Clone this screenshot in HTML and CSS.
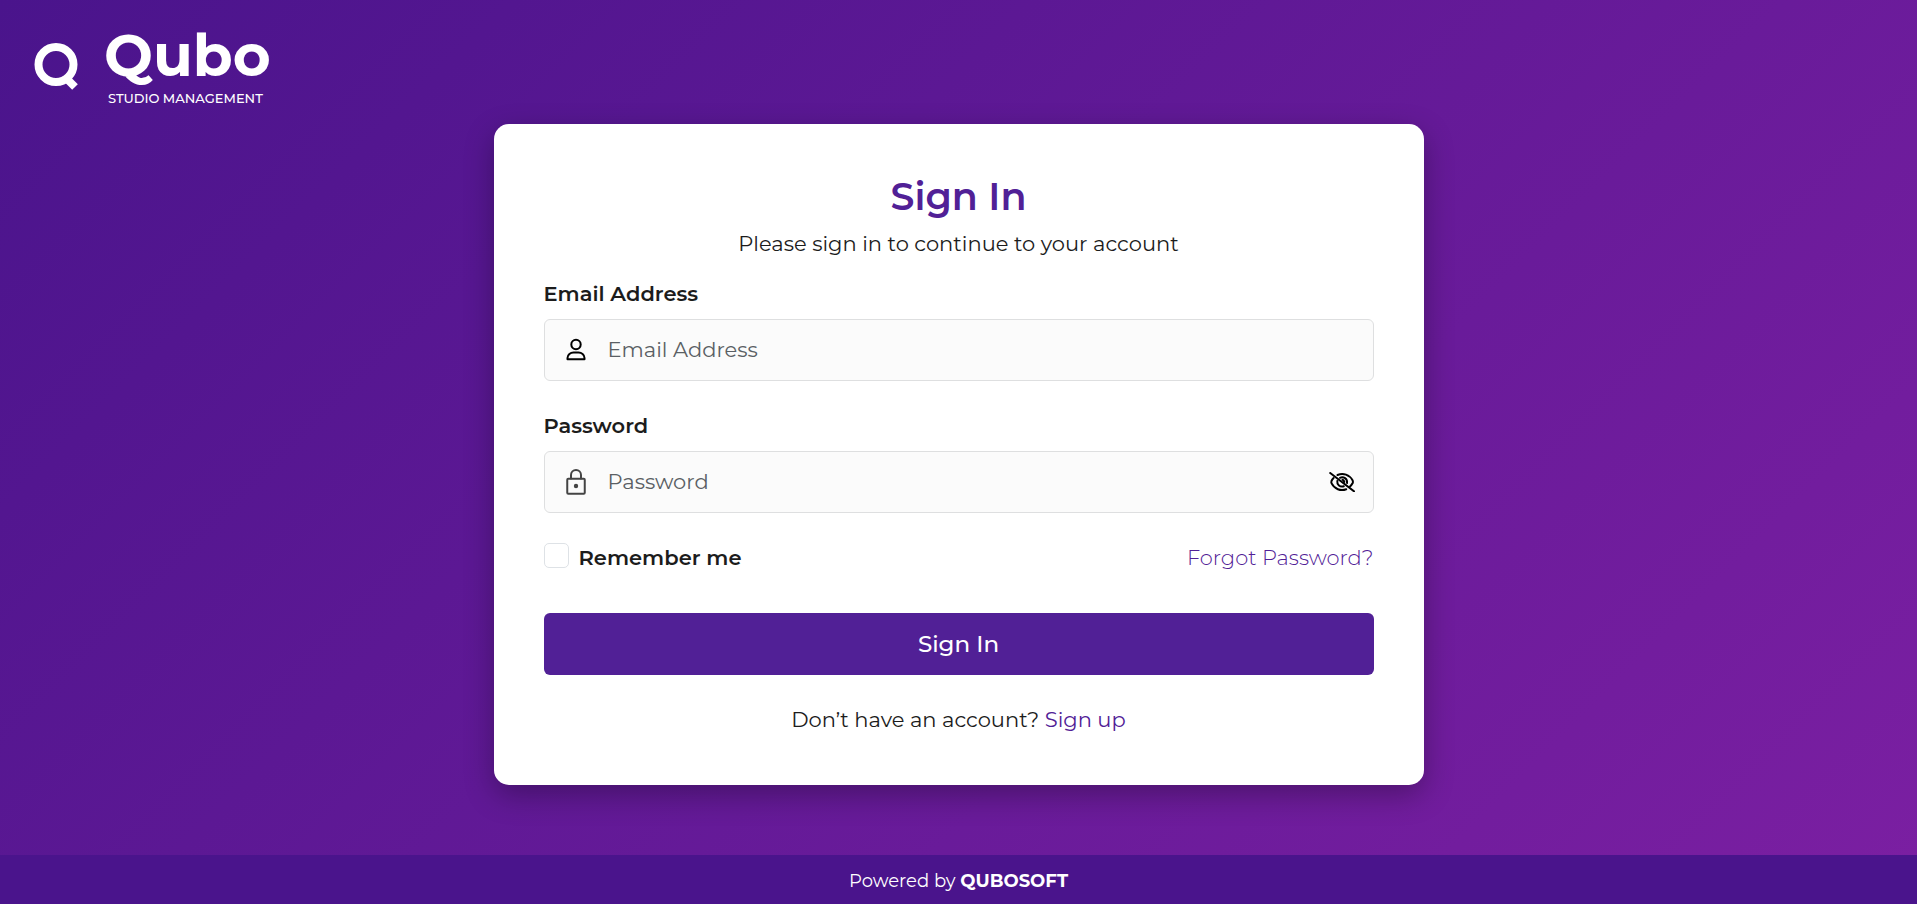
FILE: index.html
```html
<!doctype html>
<html lang="en">
<head>
  <meta charset="utf-8">
  <meta name="viewport" content="width=device-width, initial-scale=1">
  <title>Qubo - Sign In</title>
  <link rel="stylesheet" href="styles.css">
</head>
<body>
	<header class="site-header">
		<svg class="logo-mark" aria-hidden="true" viewBox="0 -5 44 53">
			<circle cx="22" cy="21.500" r="17.500" />
			<path d="M31 34 L41 44" />
		</svg>
		<div class="logo">
			<span class="logo-name">Qubo</span>
			<span class="logo-tagline">STUDIO MANAGEMENT</span>
		</div>
	</header>
	<main>
		<form class="card" action="#" method="post">
			<h1>Sign In</h1>
			<p class="intro">Please sign in to continue to your account</p>

			<label class="field-label" for="email">Email Address</label>
			<div class="field">
				<svg class="icon-user" aria-hidden="true" viewBox="0 0 20 24">
					<circle cx="10" cy="6.500" r="4.700" />
					<path d="M1.500 21.200 v-1.200 c0-3.400 3-5.400 6-5.400 h5 c3 0 6 2 6 5.400 v1.200 z" />
				</svg>
				<input id="email" type="email" name="email" placeholder="Email Address">
			</div>

			<label class="field-label" for="password">Password</label>
			<div class="field">
				<svg class="icon-lock" aria-hidden="true" viewBox="0 0 20 26">
					<rect x="1.250" y="9.750" width="17.500" height="15" rx="1" />
					<path d="M5 9.500 V6 a5 5 0 0 1 10 0 V9.500" />
					<circle class="keyhole" cx="10" cy="17" r="2.200" />
				</svg>
				<input id="password" type="password" name="password" placeholder="Password">
				<button class="toggle-password" type="button" aria-label="Show password">
					<svg aria-hidden="true" viewBox="0 0 26 20">
						<path d="M8.500 3 C14 .6 20.500 2.500 23.700 8.500 C24 9.300 24 10.300 23.700 11 Q22.500 13.200 21 14.500" />
						<path d="M4.600 6 Q3.200 7.300 2.500 9 C2.200 9.800 2.200 10.600 2.600 11.400 C5.500 17 11.500 19.400 17.300 17.200" />
						<path d="M11 5.800 C14.500 4.300 18.600 6.600 18 11 M8.300 9 C7.800 12.500 11 15.500 14.800 14.300" />
						<path d="M13.500 7.800 Q15 8.200 15.300 10" />
						<path d="M1.200 1 L25 19.300" />
					</svg>
				</button>
			</div>

			<div class="options">
				<label class="remember"><input type="checkbox" name="remember">Remember me</label>
				<a class="forgot" href="#">Forgot Password?</a>
			</div>

			<button class="submit" type="submit">Sign In</button>
			<p class="signup">Don’t have an account? <a href="#">Sign up</a></p>
		</form>
	</main>
	<footer>
		<p>Powered by <strong>QUBOSOFT</strong></p>
	</footer>
</body>
</html>
```

FILE: styles.css
```css
:root {
	box-sizing: border-box;
	--primary: #512096;
	--primary-dark: #4a148c;
	--primary-light: #7b1fa2;
	--text: #1c1c1c;
	--placeholder: #5a5f64;
	--field: #fbfbfb;
	--border: #dedfe0;
	--white: #fff;
}

*,
*::after,
*::before {
	box-sizing: inherit;
}

body {
	background: linear-gradient(135deg, var(--primary-dark), var(--primary-light));
	color: var(--text);
	display: flex;
	flex-direction: column;
	font: 21px/30px Montserrat, Inter, sans-serif;
	margin: 0;
	min-height: 100vh;
}

h1,
p {
	margin: 0;
}

a {
	color: var(--primary);
	text-decoration: none;
}

svg {
	display: block;
	fill: none;
	flex: none;
	stroke: currentColor;
	stroke-linecap: round;
	stroke-linejoin: round;
	stroke-width: 2;
}

/* Header */
.site-header {
	align-items: center;
	color: var(--white);
	display: flex;
	gap: 26px;
	padding: 22px 34px 18px;
}

.logo-mark {
	height: 53px;
	stroke-linecap: butt;
	stroke-width: 8;
	width: 44px;
}

.logo {
	display: flex;
	flex-direction: column;
}

.logo-name {
	font-size: 58px;
	font-weight: 700;
	line-height: 68px;
}

.logo-tagline {
	font-size: 13px;
	font-weight: 500;
	line-height: 16px;
	padding-left: 4px;
}

/* Sign in card */
main {
	flex: 1;
	padding: 0 20px 69px;
}

.card {
	background: var(--white);
	border-radius: 15px;
	box-shadow: 0 10px 30px rgba(0, 0, 0, 0.3);
	margin: 0 auto;
	max-width: 930px;
	padding: 50px;
}

h1 {
	color: var(--primary);
	font-size: 38px;
	font-weight: 600;
	line-height: 46px;
	margin-bottom: 9px;
	text-align: center;
}

.intro {
	margin-bottom: 20px;
	text-align: center;
}

.field-label {
	display: block;
	font-weight: 600;
	margin-bottom: 10px;
}

.field {
	align-items: center;
	background: var(--field);
	border: 1px solid var(--border);
	border-radius: 6px;
	display: flex;
	gap: 22px;
	height: 62px;
	margin-bottom: 30px;
	padding: 0 18px 0 21px;
}

.field input {
	background: none;
	border: 0;
	color: inherit;
	flex: 1;
	font: inherit;
	min-width: 0;
	outline: 0;
	padding: 0;
}

.field input::placeholder {
	color: var(--placeholder);
	opacity: 1;
}

.field:focus-within {
	border-color: var(--primary);
}

.icon-user {
	color: #000;
	height: 24px;
	width: 20px;
}

.icon-lock {
	color: #444;
	height: 26px;
	width: 20px;
}

.keyhole {
	fill: currentColor;
	stroke: none;
}

.toggle-password {
	background: none;
	border: 0;
	color: #000;
	cursor: pointer;
	padding: 0;
}

.toggle-password svg {
	height: 20px;
	width: 26px;
}

.options {
	align-items: center;
	display: flex;
	flex-wrap: wrap;
	justify-content: space-between;
	margin-bottom: 40px;
}

.remember {
	align-items: flex-start;
	display: flex;
	font-weight: 600;
	gap: 10px;
}

.remember input {
	appearance: none;
	background: var(--white);
	border: 1px solid #dee2e6;
	border-radius: 5px;
	height: 25px;
	margin: 0;
	width: 25px;
}

.remember input:checked {
	background: var(--primary);
}

.forgot {
	font-weight: 300;
}

.submit {
	background: var(--primary);
	border: 0;
	border-radius: 6px;
	color: var(--white);
	cursor: pointer;
	display: block;
	font: inherit;
	font-size: 23px;
	font-weight: 500;
	height: 62px;
	margin-bottom: 30px;
	width: 100%;
}

.signup {
	text-align: center;
}

/* Footer */
footer {
	background: var(--primary-dark);
	color: var(--white);
	font-size: 18px;
	line-height: 25px;
	padding: 14px 20px 10px;
	text-align: center;
}
```
